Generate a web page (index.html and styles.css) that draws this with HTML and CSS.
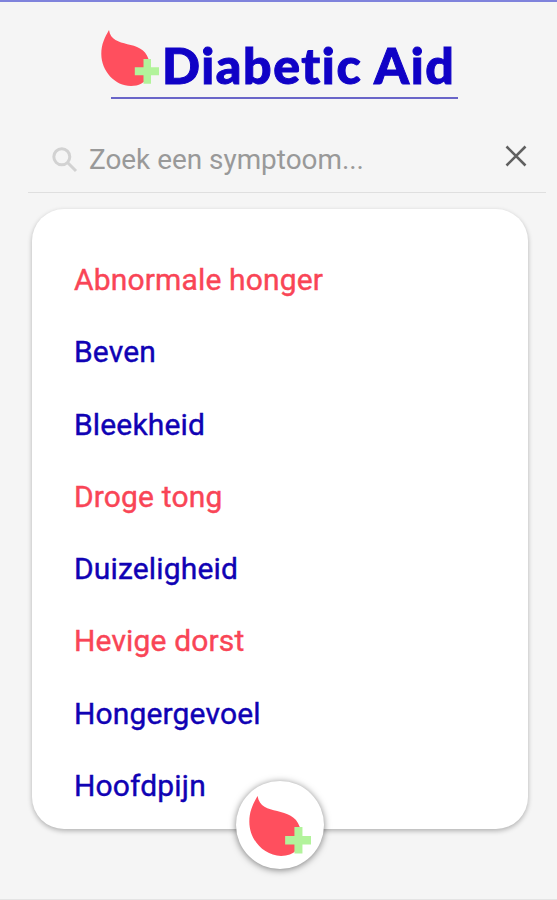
FILE: index.html
```html
<!DOCTYPE html>
<html lang="nl">
<head>
    <meta charset="UTF-8">
    <meta name="viewport" content="width=device-width, initial-scale=1.0">
    <title>Diabetic Aid</title>
    <link rel="stylesheet" href="styles.css">
</head>
<body>

    <header>
        <div class="logo">
            <svg class="logo-icon" viewBox="0 0 58 58">
                <path class="drop" d="M8 1C11 21 41 9 47.5 30C52 44 46 57 30 57C14 57 .3 42 .3 25C.3 15 4 8 8 1Z"/>
                <path class="plus" d="M42.5 30h7.5v8.3h8v8h-8v8.5h-7.5v-8.5h-8.7v-8h8.7z"/>
            </svg>
            <h1>Diabetic Aid</h1>
        </div>
    </header>

    <!-- Zoekbalk -->
    <form class="search">
        <svg class="search-icon" viewBox="0 0 26 26">
            <circle cx="9.8" cy="9.8" r="8"/>
            <path d="M15.5 15.5L24 24"/>
        </svg>
        <input type="text" placeholder="Zoek een symptoom...">
        <svg class="close-icon" viewBox="0 0 22 22">
            <path d="M1.5 1.5L20.5 20.5M20.5 1.5L1.5 20.5"/>
        </svg>
    </form>

    <!-- Lijst met symptomen -->
    <main class="card">
        <ul class="symptoms">
            <li class="urgent">Abnormale honger</li>
            <li>Beven</li>
            <li>Bleekheid</li>
            <li class="urgent">Droge tong</li>
            <li>Duizeligheid</li>
            <li class="urgent">Hevige dorst</li>
            <li>Hongergevoel</li>
            <li>Hoofdpijn</li>
        </ul>
        <button class="home-button" type="button" aria-label="Home">
            <svg viewBox="0 0 58 58">
                <path class="drop" d="M8 1C11 21 41 9 47.5 30C52 44 46 57 30 57C14 57 .3 42 .3 25C.3 15 4 8 8 1Z"/>
                <path class="plus" d="M42.5 30h7.5v8.3h8v8h-8v8.5h-7.5v-8.5h-8.7v-8h8.7z"/>
            </svg>
        </button>
    </main>

</body>
</html>
```
FILE: styles.css
```css
* { box-sizing: border-box; }
body {
    margin: 0;
    height: 900px;
    overflow: hidden;
    background-color: #f5f5f5;
    border-top: 2px solid #7f83dc;
    border-bottom: 1px solid #e4e4e4;
    font-family: Roboto, sans-serif;
}
.drop { fill: #ff4f5e; }
.plus { fill: #b2f39b; }

/* Logo */
header {
    height: 97px;
    margin: 0 99px 0 111px;
    border-bottom: 2px solid #6965c8;
}
.logo {
    display: flex;
    margin-left: -10px;
    padding-top: 27px;
}
.logo-icon {
    width: 58px;
    height: 58px;
    flex: none;
}
h1 {
    margin: 6px 0 0 3px;
    font-family: Lato, sans-serif;
    font-size: 50px;
    font-weight: 900;
    line-height: 60px;
    letter-spacing: 1.6px;
    font-variant-ligatures: none;
    white-space: nowrap;
    color: #1002c6;
    -webkit-text-stroke: 1px #1002c6;
}

/* Zoekbalk */
.search {
    display: flex;
    align-items: center;
    height: 66px;
    margin: 28px 11px 0 28px;
    padding: 0 19px 0 24px;
    border-bottom: 1px solid #dfdfdf;
}
.search-icon, .close-icon {
    flex: none;
    fill: none;
}
.search-icon {
    width: 26px;
    height: 26px;
    stroke: #d2d2d2;
    stroke-width: 3;
}
.close-icon {
    width: 22px;
    height: 22px;
    margin-bottom: 7px;
    stroke: #606060;
    stroke-width: 2.6;
}
.search input {
    flex: 1;
    min-width: 0;
    margin-left: 11px;
    padding: 0;
    border: none;
    outline: none;
    background: none;
    font-family: Roboto, sans-serif;
    font-size: 27.9px;
}
.search input::placeholder { color: #999; }

/* Kaart */
.card {
    position: relative;
    height: 620px;
    margin: 16px 29px 0 32px;
    padding: 35px 42px 0;
    border-radius: 32px;
    background-color: #fff;
    box-shadow: 0 2px 5px rgba(0, 0, 0, 0.28);
}
.symptoms {
    margin: 0;
    padding: 0;
    list-style: none;
    font-size: 30px;
    letter-spacing: 0.15px;
    color: #1002b4;
    -webkit-text-stroke: 0.4px;
}
.symptoms li {
    height: 72.3px;
    line-height: 72.3px;
    white-space: nowrap;
}
.symptoms .urgent { color: #f94556; }

.home-button {
    position: absolute;
    left: 204px;
    bottom: -40px;
    width: 88px;
    height: 88px;
    padding: 2px 12px 0 13px;
    border: none;
    border-radius: 50%;
    background-color: #fff;
    box-shadow: 0 1px 7px rgba(0, 0, 0, 0.5);
}
.home-button svg {
    display: block;
    width: 62px;
    height: 62px;
}
```
